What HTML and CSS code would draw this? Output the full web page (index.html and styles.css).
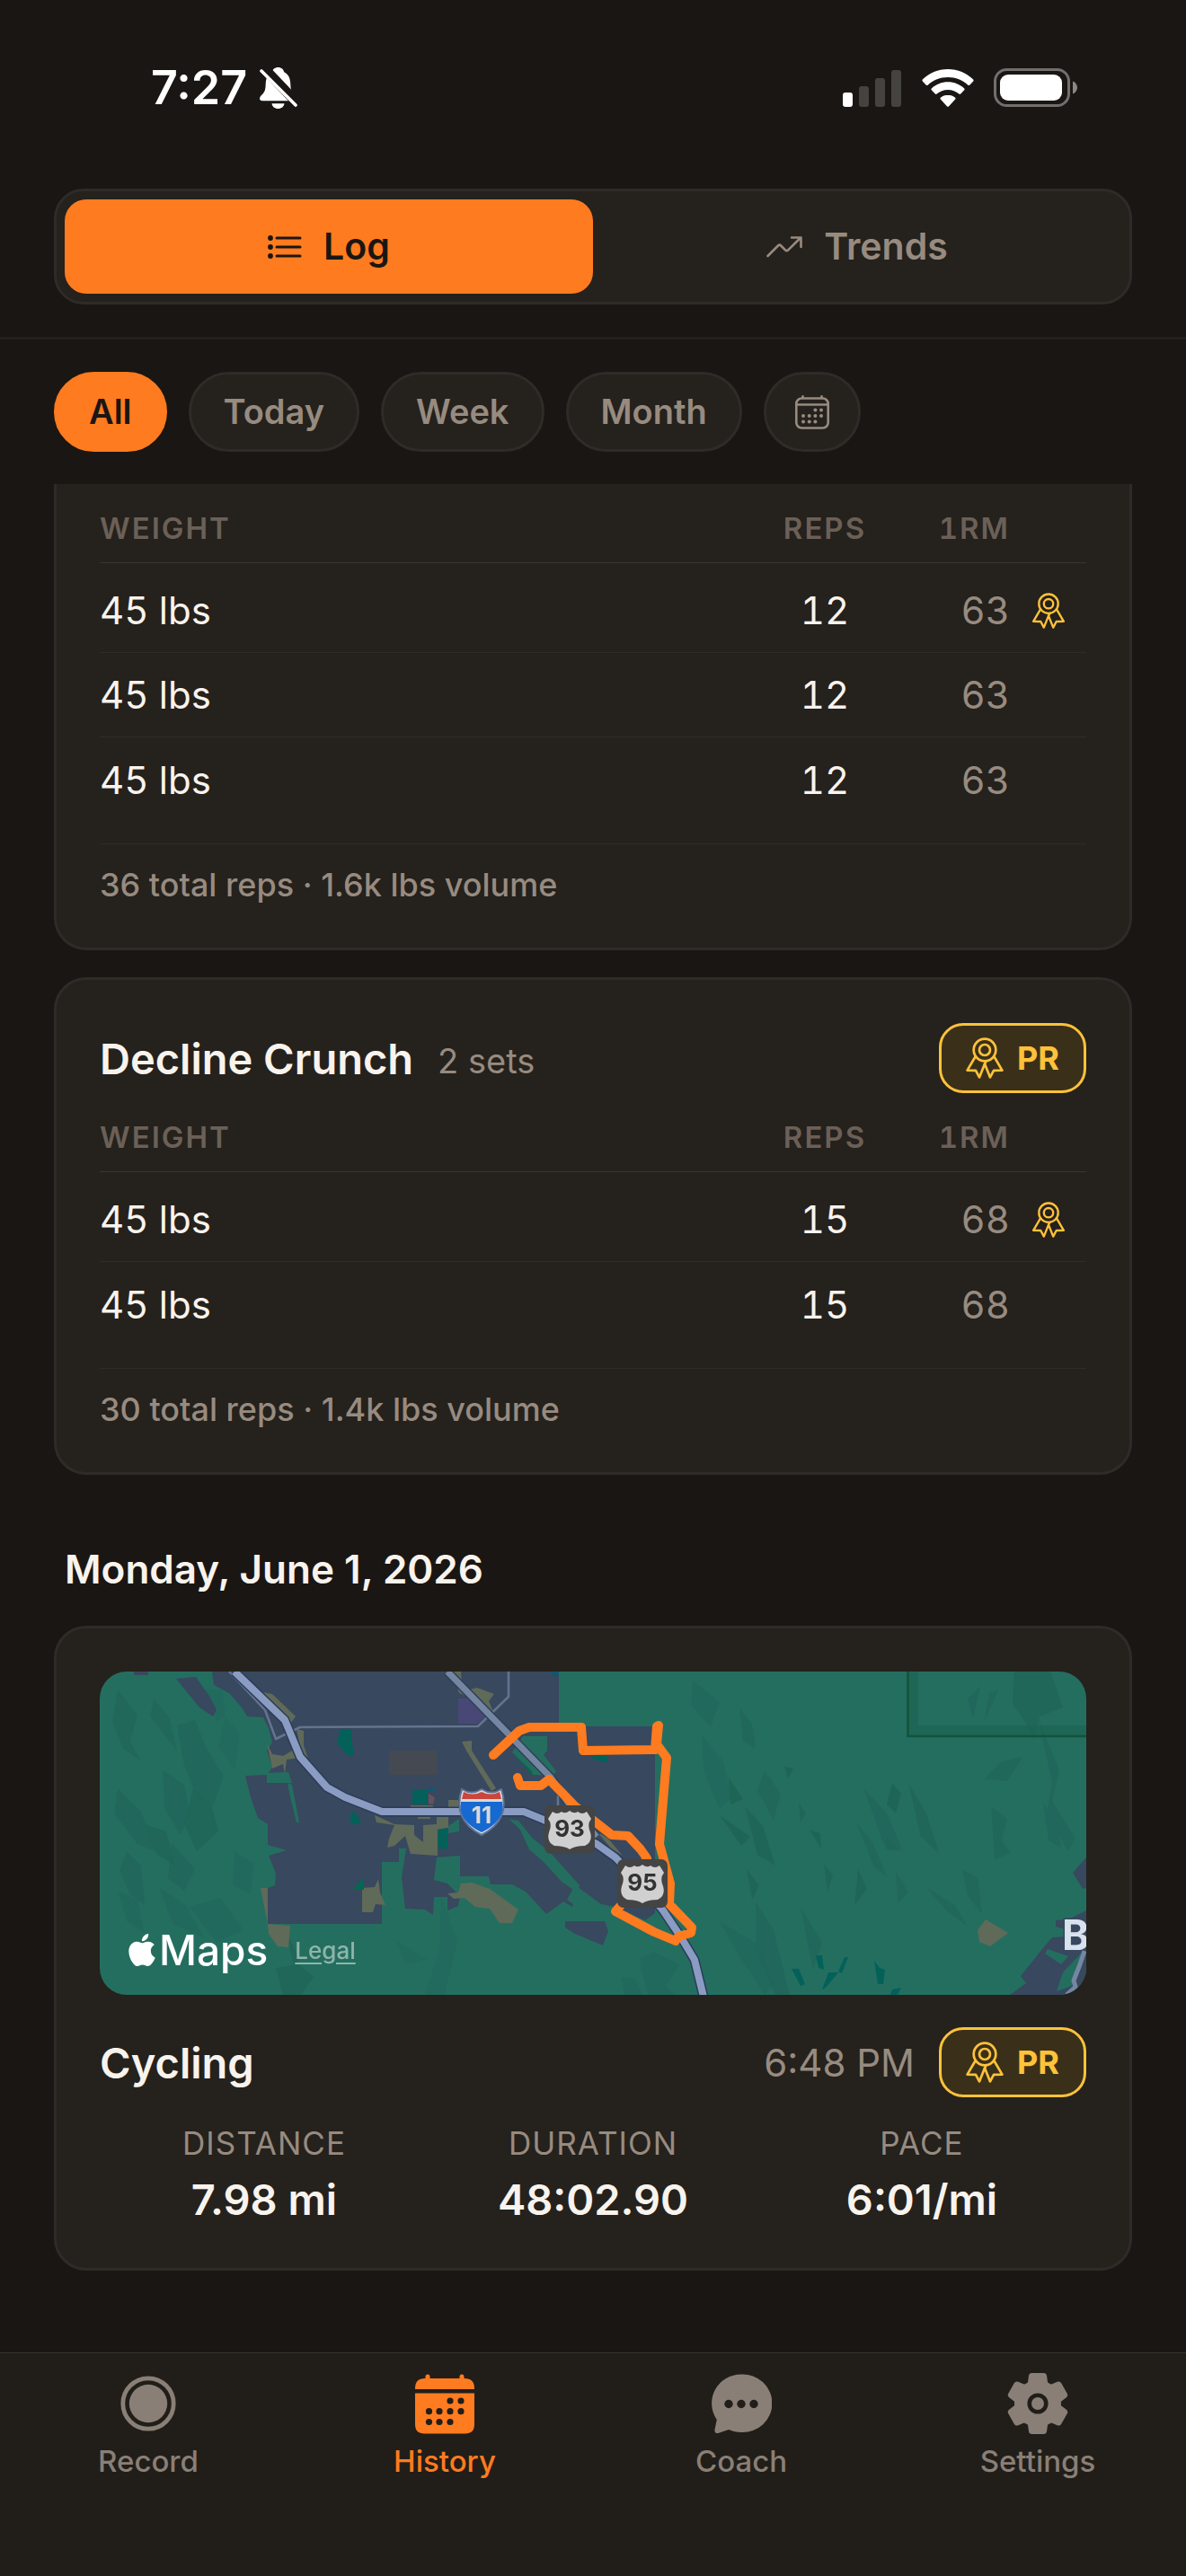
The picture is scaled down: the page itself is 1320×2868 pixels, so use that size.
FILE: index.html
```html
<!DOCTYPE html>
<html lang="en">
<head>
    <meta charset="UTF-8">
    <meta name="viewport" content="width=device-width, initial-scale=1">
    <title>History</title>
    <link rel="stylesheet" href="styles.css">
</head>
<body>
    <!-- shared icons -->
    <svg class="sprite" aria-hidden="true">
        <symbol id="icon-award" viewBox="0 0 42 46">
            <g fill="none" stroke="currentColor" stroke-width="2.7" stroke-linejoin="round" stroke-linecap="round">
                <circle cx="21" cy="14" r="12.3"/>
                <circle cx="21" cy="14" r="6"/>
                <path d="M10.5 21.5L1.6 36.6L11 36.8L15 44.4L21 29.5L22.5 26.5"/>
                <path d="M31.5 21.5L40.4 36.6L31 36.8L27 44.4L21 29.5"/>
            </g>
        </symbol>
    </svg>

    <div class="status-bar">
        <div class="status-left">
            <span class="status-time">7:27</span>
            <svg width="42" height="46" viewBox="0 0 42 46">
                <path fill="#fff" d="M20.500 0c-3.700 0-6.200 2.300-6.700 5.300C8.900 7.700 7 12 6.700 18.500c-.2 6-.9 8.500-3.700 11.500C1 32 0 33.200 0 34.800 0 36.300 1.200 37.300 3 37.300h35c1.800 0 3-1 3-2.500 0-1.600-1-2.800-3-4.800-2.800-3-3.500-5.500-3.700-11.500C34 12 32.100 7.700 27.200 5.300 26.700 2.300 24.200 0 20.500 0zM13.500 40.200h14c-.4 3.400-3.200 5.800-7 5.800s-6.600-2.400-7-5.800z"/>
                <path d="M4 0L44 42" stroke="#1a1613" stroke-width="11"/>
                <path d="M2 4L40 42" stroke="#fff" stroke-width="3.600" stroke-linecap="round"/>
            </svg>
        </div>
        <div class="status-right">
            <svg width="66" height="42" viewBox="0 0 66 42">
                <rect x="0" y="26" width="11" height="16" rx="3" fill="#fff"/>
                <rect x="18" y="19" width="11" height="23" rx="3" fill="#454340"/>
                <rect x="36" y="10" width="11" height="32" rx="3" fill="#454340"/>
                <rect x="54" y="1" width="11" height="41" rx="3" fill="#454340"/>
            </svg>
            <svg width="58" height="42" viewBox="0 0 58 42">
                <g fill="#fff">
                    <path d="M29 0C18 0 8 4.400.800 11.600c-.5.500-.5 1.300 0 1.800l4 4.300c.5.500 1.300.5 1.800 0C12.500 12.200 20.300 9 29 9s16.500 3.200 22.400 8.700c.5.500 1.300.5 1.800 0l4-4.300c.5-.5.5-1.300 0-1.800C50 4.400 40 0 29 0z"/>
                    <path d="M29 14.300c-7 0-13.400 2.700-18.200 7.200-.5.500-.5 1.300 0 1.800l4 4.200c.5.500 1.300.5 1.800.1C20 24.700 24.300 23 29 23s9 1.700 12.400 4.600c.5.400 1.300.4 1.800-.1l4-4.200c.5-.5.500-1.300 0-1.800-4.800-4.500-11.200-7.200-18.200-7.200z"/>
                    <path d="M29 28.700c-3.100 0-6 1.100-8.200 3-.5.500-.5 1.200 0 1.700l7.300 8c.5.500 1.300.5 1.800 0l7.300-8c.5-.5.500-1.200 0-1.700-2.200-1.900-5.100-3-8.200-3z"/>
                </g>
            </svg>
            <svg width="94" height="44" viewBox="0 0 94 44">
                <rect x="1.500" y="1.500" width="82" height="40" rx="13" fill="none" stroke="#72706e" stroke-width="3"/>
                <rect x="7" y="7" width="69" height="29" rx="9" fill="#fff"/>
                <path d="M88 14.500c3 1 5 4 5 7s-2 6-5 7z" fill="#8a8886"/>
            </svg>
        </div>
    </div>

    <header class="header">
        <div class="segmented">
            <button type="button" class="segment segment-active">
                <svg width="38" height="26" viewBox="0 0 38 26">
                    <g fill="currentColor">
                        <circle cx="3" cy="3" r="2.900"/><circle cx="3" cy="13" r="2.900"/><circle cx="3" cy="23" r="2.900"/>
                    </g>
                    <path d="M10 3h26M10 13h26M10 23h26" stroke="currentColor" stroke-width="3" stroke-linecap="round"/>
                </svg>
                Log
            </button>
            <button type="button" class="segment">
                <svg width="40" height="24" viewBox="0 0 40 24">
                    <path d="M1.500 22L13 10.500q1.600-1.600 3.200 0L21 15.300q1.600 1.600 3.200 0L38 1.800M28 1.500h10.500V12" fill="none" stroke="currentColor" stroke-width="2.600" stroke-linecap="round" stroke-linejoin="round"/>
                </svg>
                Trends
            </button>
        </div>
    </header>

    <div class="filters">
        <button type="button" class="chip chip-active">All</button>
        <button type="button" class="chip">Today</button>
        <button type="button" class="chip">Week</button>
        <button type="button" class="chip">Month</button>
        <button type="button" class="chip chip-icon" aria-label="Pick a date">
            <svg width="38" height="38" viewBox="0 0 38 38">
                <g fill="none" stroke="currentColor" stroke-width="2.600" stroke-linecap="round">
                    <rect x="1.300" y="3.500" width="35.400" height="33" rx="6"/>
                    <path d="M2 10.500h34" stroke-width="2.400"/>
                    <path d="M8.500 1.300V3M29.500 1.300V3"/>
                </g>
                <g fill="currentColor">
                    <circle cx="22.400" cy="16.500" r="2"/><circle cx="29" cy="16.500" r="2"/>
                    <circle cx="9" cy="23" r="2"/><circle cx="15.700" cy="23" r="2"/><circle cx="22.400" cy="23" r="2"/><circle cx="29" cy="23" r="2"/>
                    <circle cx="9" cy="29.500" r="2"/><circle cx="15.700" cy="29.500" r="2"/><circle cx="22.400" cy="29.500" r="2"/>
                </g>
            </svg>
        </button>
    </div>

    <main class="history">
        <section class="card card-scrolled">
            <table class="sets">
                <thead>
                    <tr><th class="col-weight">Weight</th><th class="col-reps">Reps</th><th class="col-max">1RM</th><th class="col-award"></th></tr>
                </thead>
                <tbody>
                    <tr>
                        <td>45 lbs</td><td class="col-reps">12</td><td class="col-max">63</td>
                        <td class="col-award"><svg class="row-award"><use href="#icon-award"/></svg></td>
                    </tr>
                    <tr><td>45 lbs</td><td class="col-reps">12</td><td class="col-max">63</td><td class="col-award"></td></tr>
                    <tr><td>45 lbs</td><td class="col-reps">12</td><td class="col-max">63</td><td class="col-award"></td></tr>
                </tbody>
            </table>
            <p class="summary">36 total reps · 1.6k lbs volume</p>
        </section>

        <section class="card">
            <div class="card-head">
                <h2 class="card-title">Decline Crunch</h2>
                <span class="card-count">2 sets</span>
                <span class="badge"><svg class="badge-icon"><use href="#icon-award"/></svg>PR</span>
            </div>
            <table class="sets">
                <thead>
                    <tr><th class="col-weight">Weight</th><th class="col-reps">Reps</th><th class="col-max">1RM</th><th class="col-award"></th></tr>
                </thead>
                <tbody>
                    <tr>
                        <td>45 lbs</td><td class="col-reps">15</td><td class="col-max">68</td>
                        <td class="col-award"><svg class="row-award"><use href="#icon-award"/></svg></td>
                    </tr>
                    <tr><td>45 lbs</td><td class="col-reps">15</td><td class="col-max">68</td><td class="col-award"></td></tr>
                </tbody>
            </table>
            <p class="summary">30 total reps · 1.4k lbs volume</p>
        </section>

        <h2 class="day">Monday, June 1, 2026</h2>

        <section class="card">
            <div class="map">
                <svg class="map-canvas" viewBox="0 0 1098 360" preserveAspectRatio="xMidYMid slice">
                    <rect width="1098" height="360" fill="#246e60"/>

                    <!-- terrain shading -->
                    <g fill="#1a574d" opacity=".42">
                        <path d="M20 20l22 28-8 30 12 22-20-14-12-30zM60 30l18 22 8 36-16-20-14-18z" opacity=".5"/>
                        <path d="M86 60l20-6 12 30 20 32-12 34-18-10-14-36z" opacity=".6"/>
                        <path d="M70 110l24 16 6 32-10 24-18-30zM20 130l26 26 16 44-20-8-26-34z" opacity=".6"/>
                        <path d="M104 130l20 18 8 30-24 22-14-30zM50 170l24 8 10 38-20-12z" opacity=".7"/>
                        <path d="M30 200l16 16 4 44-16-12-12-26zM80 190l26 30-12 24-18-14z" opacity=".6"/>
                        <path d="M20 244l22 10 8 38-20-14zM66 240l30 20 20 36-34-14z" opacity=".4"/>
                        <path d="M100 262l34-10 26 36-30 14zM150 200l22 14-4 34-20-10z" opacity=".4"/>
                        <path d="M110 20l14 12 6 24 10-6-4-30zM140 50l16 20-6 40-18-26z" opacity=".35"/>
                        <path d="M196 330l26-4 16 14-14 20h-20zM208 290l14 30-6 10z" opacity=".7"/>
                        <path d="M380 250l18 50-14 60h-22l16-50zM330 300l34 20-24 6z" opacity=".3"/>
                        <path d="M660 10l30 24-10 28-22-24zM670 70l24 30 10 40-14 14-18-44z" opacity=".4"/>
                        <path d="M712 40l14 18 4 28-14-8zM740 110l18 26-8 30-18-34z" opacity=".5"/>
                        <path d="M700 118l16 24-14 6zM762 106l10 2-6 12z"/>
                        <path d="M778 146l8 12-6 10zM718 150l20 22 14 44-20-12z" opacity=".8"/>
                        <path d="M690 160l34 24-10 10zM790 176l12 4 1 18z" opacity=".9"/>
                        <path d="M882 124l10 12-6 22-10-10z"/>
                        <path d="M850 130l26 28 18 42-22-8-10-30zM842 168l18 22 16 38-14-10z" opacity=".6"/>
                        <path d="M876 184l14 16-16-2zM900 124l20 34 14 44-20-18z" opacity=".7"/>
                        <path d="M806 214l10 12-6 20zM844 220l10 22-14 18zM720 220l14 18-8 16z" opacity=".8"/>
                        <path d="M886 222l14 24-12 12zM920 240l32 20 14 24-24-18zM960 220l18 10 4 40-16-20z" opacity=".5"/>
                        <path d="M730 256l20 32 18 72h-16l-22-50zM780 262l24 40-10 30z" opacity=".6"/>
                        <path d="M690 278l40 24 20 46-10 12-30-46z" opacity=".4"/>
                        <path d="M1018 0h40l14 40-26 10-6 26-10-20-14-20z" opacity=".7"/>
                        <path d="M1044 50l24 60-8 34 26 42-8 14-24-40 6-36zM1050 146l14 20 6 30-14-8z" opacity=".6"/>
                        <path d="M992 150l18 14-6 24 10 14-18 8zM984 120l20-20 24-6-18 28z" opacity=".55"/>
                        <path d="M1000 20l-16 38 6-34zM966 30l14-14-8 36z" opacity=".6"/>
                        <path d="M600 320l16-8 30 14-16 24 10 10h-30zM580 340l16 2 8 18h-20z" opacity=".4"/>
                    </g>
                    <path d="M899 0h12v60h187v13H899z" fill="#1b6350" opacity=".6"/>
                    <path d="M899.500 0v72H1098" fill="none" stroke="#15513a" stroke-width="2.500"/>

                    <!-- built-up area -->
                    <g fill="#38485e">
                        <path d="M125 0L127 15L144 24L158 40L164 50L182 51L188 63L192 79L186 88L192 107L186 115L162 116L168 140L176 163L187 170V193L208 199L188 205L196 225L195 238L187 241V281H314V212H333V197H341L336 229L340 264L362 265L371 271L372 251H387V266L399 261L401 250L387 236L372 232L375 207L401 205V228H433L435 237H459L474 245L497 270L516 256L526 262L532 240L558 259L574 262L607 277L618 269V61H511V0z"/>
                        <path d="M85 8L107 6L123 29L130 43L126 50L111 40zM38 0h16v4h-16zM0 14v10l3-6z"/>
                        <path d="M518 278H562L566 289L560 305L529 292L518 285z"/>
                        <path d="M1098 207L1083 224L1094 242L1098 241z"/>
                        <path d="M1098 266L1078 276L1064 277V284L1074 287V295L1060 296L1049 309L1025 339L1031 347L1013 360H1098z"/>
                    </g>
                    <g fill="#246e60">
                        <path d="M471 72H498V88L494 93L508 111L504 116L482 115L459 90z"/>
                        <path d="M186 113L210 112L214 124H186zM209 124L214 126L222 168H219L212 140z"/>
                        <path d="M455 164L466 166L482 186L500 200L534 238L532 246L514 234L494 212L478 198L468 176z"/>
                        <path d="M531 234L531 262L520 254z"/>
                        <path d="M388 172L400 164L400 178L388 180z"/>
                        <path d="M1055 309L1078 317L1070 326L1052 314zM1094 312L1072 335L1065 356L1082 350z"/>
                    </g>
                    <g fill="#606a59">
                        <path d="M182 23L192 25L218 50L212 58zM219 64L227 66L227 82L232 97L224 88zM186 80L192 92L204 94L214 88L224 96L208 98L206 114L204 103L192 108z"/>
                        <path d="M392 0L402 0L404 22L420 18L439 25L433 33L439 47L424 34L400 24z"/>
                        <path d="M403 78L414 77L414 88L441 130L436 133L408 88z"/>
                        <path d="M306 160L308 168L328 171L322 186L320 196L328 194L340 183L346 203L376 205L376 176L388 174V162H375V170L360 171V190L350 182V171L328 170z"/>
                        <path d="M346 149H371V154H346zM388 143H399V152H388zM354 162H368V164H354z"/>
                        <path d="M292 241L306 240L310 231L312 246L318 260L307 259L304 268H292z"/>
                        <path d="M387 247L399 246L402 236L414 235L434 242L466 265L459 280H445L434 264L418 262L406 252L394 253z"/>
                        <path d="M179 241H187V281zM187 281L212 283L210 307L198 306L188 292z"/>
                        <path d="M553 178L566 186L582 205L570 198z"/>
                        <path d="M986 276L1011 291L991 306L979 301L977 288z"/>
                    </g>
                    <rect x="322" y="88" width="53" height="27" fill="#454951"/>
                    <path d="M399 30H415L432 48L420 58H399z" fill="#484876"/>
                    <path d="M366 136L373 140L371 148L366 147z" fill="#68505c"/>
                    <path d="M364 130H374V133H364zM502 0H511V4L506 6z" fill="#12566e"/>
                    <g fill="#03615a">
                        <path d="M268 64H280V82L283 84V93H276L264 80zM279 157H286V162L290 164V170H279zM376 176L387 174V198L376 196z"/>
                        <path d="M545 93H565V101L553 99zM348 132H365V148H348z"/>
                        <path d="M294 229V243H281zM459 90L480 110L484 118z" fill="#036850"/>
                        <path d="M797 316H804L806 332L800 330zM770 331H778L785 348L780 350zM829 318H833L826 336L822 334zM811 335H822L808 352L804 354zM862 322L868 330L874 332L872 348H866zM882 354L892 352L888 360H880z"/>
                    </g>

                    <!-- roads -->
                    <g fill="none" stroke-linejoin="round">
                        <path d="M144 0L184 43L196 75L223 62L421 61L455 28V0M510 138V150" stroke="#64748f" stroke-width="2.500"/>
                        <path d="M1096 311L1091 326L1084 344L1086 351L1076 360" stroke="#7486a2" stroke-width="5"/>
                        <path d="M387 0L502 118L522 147L553 184" stroke="#2f3f57" stroke-width="10"/>
                        <path d="M387 0L502 118L522 147L553 184" stroke="#7486a2" stroke-width="7"/>
                        <path d="M150 0L206 54L223 95L253 129L273 140L314 156H472L494 165L553 192L574 207L602 236L627 266L647 296L662 321L672 362" stroke="#2c3b58" stroke-width="11"/>
                        <path d="M150 0L206 54L223 95L253 129L273 140L314 156H472L494 165L553 192L574 207L602 236L627 266L647 296L662 321L672 362" stroke="#8b9cc2" stroke-width="8"/>
                    </g>

                    <!-- recorded route -->
                    <path d="M438 93L467 66L478 62H536L538 88L618 87L620 61L622 60L620 81L631 96L623 192L635 236L634 259L659 285L658 291L644 295L641 300L617 290L574 267L582 258L609 208L602 198L588 183L570 182L556 171L529 150L500 120L491 127L468 127L465 118" fill="none" stroke="#ff7b1f" stroke-width="10" stroke-linejoin="round" stroke-linecap="round"/>

                    <!-- road shields -->
                    <path d="M403 131Q414 138 425 131Q436 138 447 131Q458 165 425 182Q392 165 403 131z" fill="#d8d8da" stroke="#5f7296" stroke-width="2"/>
                    <path d="M405 134Q415 139 425 134Q435 139 445 134L447 142H403z" fill="#c8463e"/>
                    <path d="M402 145H448Q452 166 425 179Q398 166 402 145z" fill="#1669d0"/>
                    <text class="shield-text shield-light" x="425" y="169">11</text>

                    <rect x="495" y="149" width="56" height="54" rx="7" fill="#444"/>
                    <path id="us-shield" d="M504 156Q509 160 514 156Q518 159 523 155Q528 159 532 156Q537 160 542 156L547 164Q542 170 546 179Q549 190 540 194Q529 194 523 198Q517 194 506 194Q497 190 500 179Q504 170 499 164z" fill="#d0d0d0"/>
                    <text class="shield-text" x="523" y="184">93</text>
                    <rect x="576" y="209" width="56" height="54" rx="7" fill="#444"/>
                    <use href="#us-shield" x="81" y="60"/>
                    <text class="shield-text" x="604" y="244">95</text>

                    <text class="city" x="1071" y="310">Boulder City</text>
                </svg>
                <div class="map-credit">
                    <svg width="30" height="36" viewBox="2.200 0 19.600 24">
                        <path fill="#fff" d="M12.152 6.896c-.948 0-2.415-1.078-3.960-1.040-2.040.027-3.910 1.183-4.961 3.014-2.117 3.675-.546 9.103 1.519 12.090 1.013 1.454 2.208 3.090 3.792 3.039 1.520-.065 2.090-.987 3.935-.987 1.831 0 2.350.987 3.960.948 1.637-.026 2.676-1.480 3.676-2.948 1.156-1.688 1.636-3.325 1.662-3.415-.039-.013-3.182-1.221-3.220-4.857-.026-3.040 2.480-4.494 2.597-4.559-1.429-2.090-3.623-2.324-4.390-2.376-2-.156-3.675 1.090-4.610 1.090zM15.530 3.830c.843-1.012 1.400-2.427 1.245-3.830-1.207.052-2.662.805-3.532 1.818-.78.896-1.454 2.338-1.273 3.714 1.338.104 2.715-.688 3.559-1.701"/>
                    </svg>
                    <span class="map-brand">Maps</span>
                    <a class="map-legal" href="#">Legal</a>
                </div>
            </div>

            <div class="card-head card-head-ride">
                <h2 class="card-title">Cycling</h2>
                <time class="card-time">6:48 PM</time>
                <span class="badge"><svg class="badge-icon"><use href="#icon-award"/></svg>PR</span>
            </div>
            <dl class="stats">
                <div class="stat"><dt>Distance</dt><dd>7.98 mi</dd></div>
                <div class="stat"><dt>Duration</dt><dd>48:02.90</dd></div>
                <div class="stat"><dt>Pace</dt><dd>6:01/mi</dd></div>
            </dl>
        </section>
    </main>

    <nav class="tab-bar">
        <a class="tab" href="#">
            <svg width="68" height="68" viewBox="0 0 68 68">
                <circle cx="34" cy="34" r="28.200" fill="none" stroke="currentColor" stroke-width="4.800"/>
                <circle cx="34" cy="34" r="21.200" fill="currentColor"/>
            </svg>
            Record
        </a>
        <a class="tab tab-active" href="#">
            <svg width="68" height="68" viewBox="0 0 68 68">
                <path fill="currentColor" d="M1 18v-1Q1 6 12 6h.500V4a2.400 2.400 0 0 1 5 0v2h33V4a2.400 2.400 0 0 1 5 0v2h.500Q67 6 67 17v1zM1 22.500h66V57q0 10.500-10.500 10.500h-45Q1 67.500 1 57z"/>
                <g fill="#211e19">
                    <circle cx="40" cy="31" r="3.600"/><circle cx="52" cy="31" r="3.600"/>
                    <circle cx="16.500" cy="42.700" r="3.600"/><circle cx="28" cy="42.700" r="3.600"/><circle cx="40" cy="42.700" r="3.600"/><circle cx="52" cy="42.700" r="3.600"/>
                    <circle cx="16.500" cy="54.500" r="3.600"/><circle cx="28" cy="54.500" r="3.600"/><circle cx="40" cy="54.500" r="3.600"/>
                </g>
            </svg>
            History
        </a>
        <a class="tab" href="#">
            <svg width="68" height="68" viewBox="0 0 68 68">
                <path fill="currentColor" d="M34 1.500A32.600 32.300 0 1 1 34 66c-5 0-9.500-1-14-3L9 66.700c-3 1-5-.7-4.500-3.700L6.800 52A32.600 32.300 0 0 1 34 1.500z"/>
                <g fill="#211e19"><circle cx="20" cy="34.500" r="4.700"/><circle cx="34" cy="34.500" r="4.700"/><circle cx="48" cy="34.500" r="4.700"/></g>
            </svg>
            Coach
        </a>
        <a class="tab" href="#">
            <svg width="68" height="68" viewBox="-34 -34 68 68">
                <g fill="currentColor">
                    <circle r="26"/>
                    <path id="tooth" d="M-15-20Q-11.500-21-11-24L-10-31Q-9.500-34-6.500-34H6.500Q9.500-34 10-31L11-24Q11.500-21 15-20z"/>
                    <use href="#tooth" transform="rotate(60)"/>
                    <use href="#tooth" transform="rotate(120)"/>
                    <use href="#tooth" transform="rotate(180)"/>
                    <use href="#tooth" transform="rotate(240)"/>
                    <use href="#tooth" transform="rotate(300)"/>
                </g>
                <circle r="9.300" fill="none" stroke="#211e19" stroke-width="4.600"/>
            </svg>
            Settings
        </a>
    </nav>
</body>
</html>
```
FILE: styles.css
```css
* {
    box-sizing: border-box;
}

body {
    margin: 0;
    min-height: 100vh;
    display: flex;
    flex-direction: column;
    background: #1a1613;
    color: #f8f3ed;
    font-family: Inter, "Liberation Sans", sans-serif;
    font-size: 42px;
}

h2, p, dl, dd {
    margin: 0;
}

svg {
    display: block;
    flex: none;
}

button {
    font-family: inherit;
    cursor: pointer;
}

.sprite {
    position: absolute;
    width: 0;
    height: 0;
}

/* status bar */
.status-bar {
    display: flex;
    justify-content: space-between;
    align-items: center;
    padding: 66px 120px 80px 168px;
    color: #fff;
}

.status-left {
    display: flex;
    align-items: center;
    gap: 14px;
}

.status-time {
    font-size: 52px;
    font-weight: 600;
    line-height: 64px;
}

.status-right {
    display: flex;
    align-items: center;
    gap: 22px;
}

/* log / trends switch */
.header {
    padding: 0 60px 36px;
    border-bottom: 3px solid #24201d;
}

.segmented {
    display: flex;
    padding: 9px;
    background: #25211c;
    border: 3px solid #2f2b28;
    border-radius: 33px;
}

.segment {
    flex: 1;
    display: flex;
    justify-content: center;
    align-items: center;
    gap: 24px;
    padding: 27px 0;
    border: none;
    border-radius: 24px;
    background: none;
    color: #978b80;
    font-size: 41px;
    font-weight: 600;
    line-height: 51px;
}

.segment-active {
    background: #ff7b1f;
    color: #1a1613;
}

/* filters */
.filters {
    display: flex;
    gap: 24px;
    padding: 36px 60px;
}

.chip {
    display: flex;
    align-items: center;
    padding: 18px 36px;
    background: #25211c;
    border: 3px solid #2f2b28;
    border-radius: 45px;
    color: #978b80;
    font-size: 38px;
    font-weight: 600;
    line-height: 47px;
}

.chip-active {
    background: #ff7b1f;
    border-color: #ff7b1f;
    color: #1a1613;
}

.chip-icon {
    padding: 18px 32px;
}

/* cards */
.history {
    display: flex;
    flex-direction: column;
    gap: 30px;
    padding: 0 60px 60px;
}

.card {
    padding: 48px;
    background: #25211c;
    border: 3px solid #2f2b28;
    border-radius: 36px;
}

/* the list is scrolled, so the first card starts under the filters */
.card-scrolled {
    padding-top: 30px;
    border-top: none;
    border-top-left-radius: 0;
    border-top-right-radius: 0;
}

.card-head {
    display: flex;
    align-items: center;
    margin-bottom: 30px;
}

.card-title {
    font-size: 47px;
    font-weight: 600;
    line-height: 57px;
}

.card-count {
    margin-left: 27px;
    padding-top: 6px;
    color: #978b80;
    font-size: 38px;
    line-height: 47px;
}

.card-time {
    margin-left: auto;
    color: #978b80;
}

.badge {
    display: flex;
    align-items: center;
    gap: 15px;
    height: 78px;
    margin-left: auto;
    padding: 0 27px;
    background: #3a301a;
    border: 3px solid #ffc23a;
    border-radius: 27px;
    color: #ffc23a;
    font-size: 36px;
    font-weight: 700;
}

.badge-icon {
    width: 42px;
    height: 46px;
}

.card-time + .badge {
    margin-left: 27px;
}

/* sets table */
.sets {
    width: 100%;
    table-layout: fixed;
    border-spacing: 0;
    font-variant-numeric: tabular-nums;
}

.sets th {
    padding: 0 0 18px;
    border-bottom: 1px solid #38342f;
    color: #6b6057;
    font-size: 33px;
    font-weight: 600;
    letter-spacing: 2px;
    line-height: 39px;
    text-align: left;
    text-transform: uppercase;
}

.sets td {
    height: 94px;
    padding: 21px 0;
    border-bottom: 1px solid #2f2b28;
    line-height: 51px;
}

.sets tbody tr:first-child td {
    height: 100px;
    padding-top: 27px;
}

.sets tbody tr:last-child td {
    border-bottom: none;
}

.sets .col-reps {
    width: 150px;
    text-align: center;
}

.sets .col-max {
    width: 131px;
    text-align: right;
}

.sets td.col-max {
    color: #978b80;
}

.sets .col-award {
    width: 85px;
}

.row-award {
    width: 38px;
    height: 40px;
    margin: 0 auto;
    color: #ffc23a;
}

.summary {
    margin-top: 24px;
    padding-top: 24px;
    border-top: 1px solid #2f2b28;
    color: #978b80;
    font-size: 36px;
    font-weight: 500;
    line-height: 43px;
}

.day {
    padding: 48px 12px 6px;
    font-size: 44px;
    font-weight: 600;
    line-height: 54px;
}

/* workout map */
.map {
    position: relative;
    margin-bottom: 36px;
    border-radius: 30px;
    overflow: hidden;
}

.map-canvas {
    width: 100%;
    height: 360px;
}

.map-credit {
    position: absolute;
    left: 32px;
    bottom: 24px;
    display: flex;
    align-items: center;
    gap: 4px;
}

.map-brand {
    color: #fff;
    font-size: 46px;
    font-weight: 500;
    line-height: 52px;
}

.map-legal {
    margin-left: 26px;
    color: #8fb5aa;
    font-size: 26px;
    font-weight: 500;
    text-underline-offset: 4px;
}

.shield-text {
    fill: #333;
    font-size: 26px;
    font-weight: 700;
    text-anchor: middle;
}

.shield-light {
    fill: #d8d8da;
}

.city {
    fill: #d8e2ee;
    stroke: #38485e;
    stroke-width: 3px;
    paint-order: stroke;
    font-size: 46px;
    font-weight: 700;
}

/* workout numbers */
.stats {
    display: flex;
}

.stat {
    flex: 1;
    text-align: center;
}

.stat dt {
    margin-bottom: 12px;
    color: #978b80;
    font-size: 35px;
    letter-spacing: 1px;
    line-height: 43px;
    text-transform: uppercase;
}

.stat dd {
    font-size: 47px;
    font-weight: 600;
    line-height: 57px;
}

/* bottom tabs */
.tab-bar {
    display: flex;
    margin-top: auto;
    padding: 22px 0 108px;
    background: #211e19;
    border-top: 1px solid #38342f;
}

.tab {
    flex: 1;
    display: flex;
    flex-direction: column;
    align-items: center;
    gap: 10px;
    color: #8a7f76;
    font-size: 33px;
    font-weight: 500;
    line-height: 40px;
    text-decoration: none;
}

.tab-active {
    color: #ff7b1f;
}
```
